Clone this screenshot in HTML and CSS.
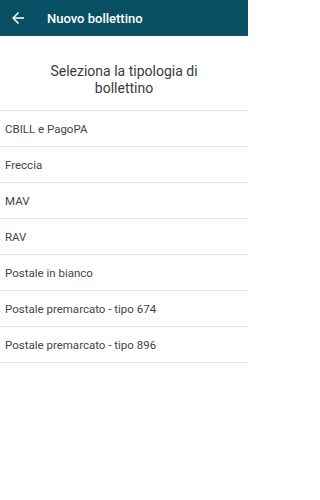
FILE: index.html
```html
<!DOCTYPE html>
<html lang="it">
<head>
<meta charset="utf-8">
<title>Nuovo bollettino</title>
<link rel="stylesheet" href="styles.css">
</head>
<body>
<header class="appbar">
  <span class="back" aria-label="Indietro">
    <svg viewBox="0 0 24 24" width="18" height="18"><path d="M20 11H7.83l5.59-5.59L12 4l-8 8 8 8 1.41-1.41L7.83 13H20v-2z" fill="#ffffff"/></svg>
  </span>
  <h1 class="title">Nuovo bollettino</h1>
</header>
<main>
  <h2 class="heading">Seleziona la tipologia di<br>bollettino</h2>
  <ul class="list">
    <li class="item">CBILL e PagoPA</li>
    <li class="item">Freccia</li>
    <li class="item">MAV</li>
    <li class="item">RAV</li>
    <li class="item">Postale in bianco</li>
    <li class="item">Postale premarcato - tipo 674</li>
    <li class="item">Postale premarcato - tipo 896</li>
  </ul>
</main>
</body>
</html>
```
FILE: styles.css
```css
* { box-sizing: border-box; }
html, body { margin: 0; padding: 0; background: #ffffff; }
body { font-family: Roboto, "Noto Sans", "Liberation Sans", sans-serif; width: 248px; }
.appbar {
  height: 36px;
  background: #0a5065;
  display: flex;
  align-items: center;
  padding-left: 9px;
}
.back { width: 18px; height: 18px; display: flex; }
.title {
  margin: 0 0 0 20px;
  font-size: 13px;
  font-weight: 500;
  color: #ffffff;
}
.heading {
  margin: 0;
  padding: 27px 10px 0;
  height: 74px;
  text-align: center;
  font-size: 14px;
  font-weight: 400;
  line-height: 17px;
  color: #3a3a3a;
}
.list { list-style: none; margin: 0; padding: 0; border-top: 1px solid #e6e6e6; }
.item {
  height: 36px;
  display: flex;
  align-items: center;
  padding-left: 5px;
  font-size: 11.5px;
  color: #444444;
  border-bottom: 1px solid #e6e6e6;
}
```
